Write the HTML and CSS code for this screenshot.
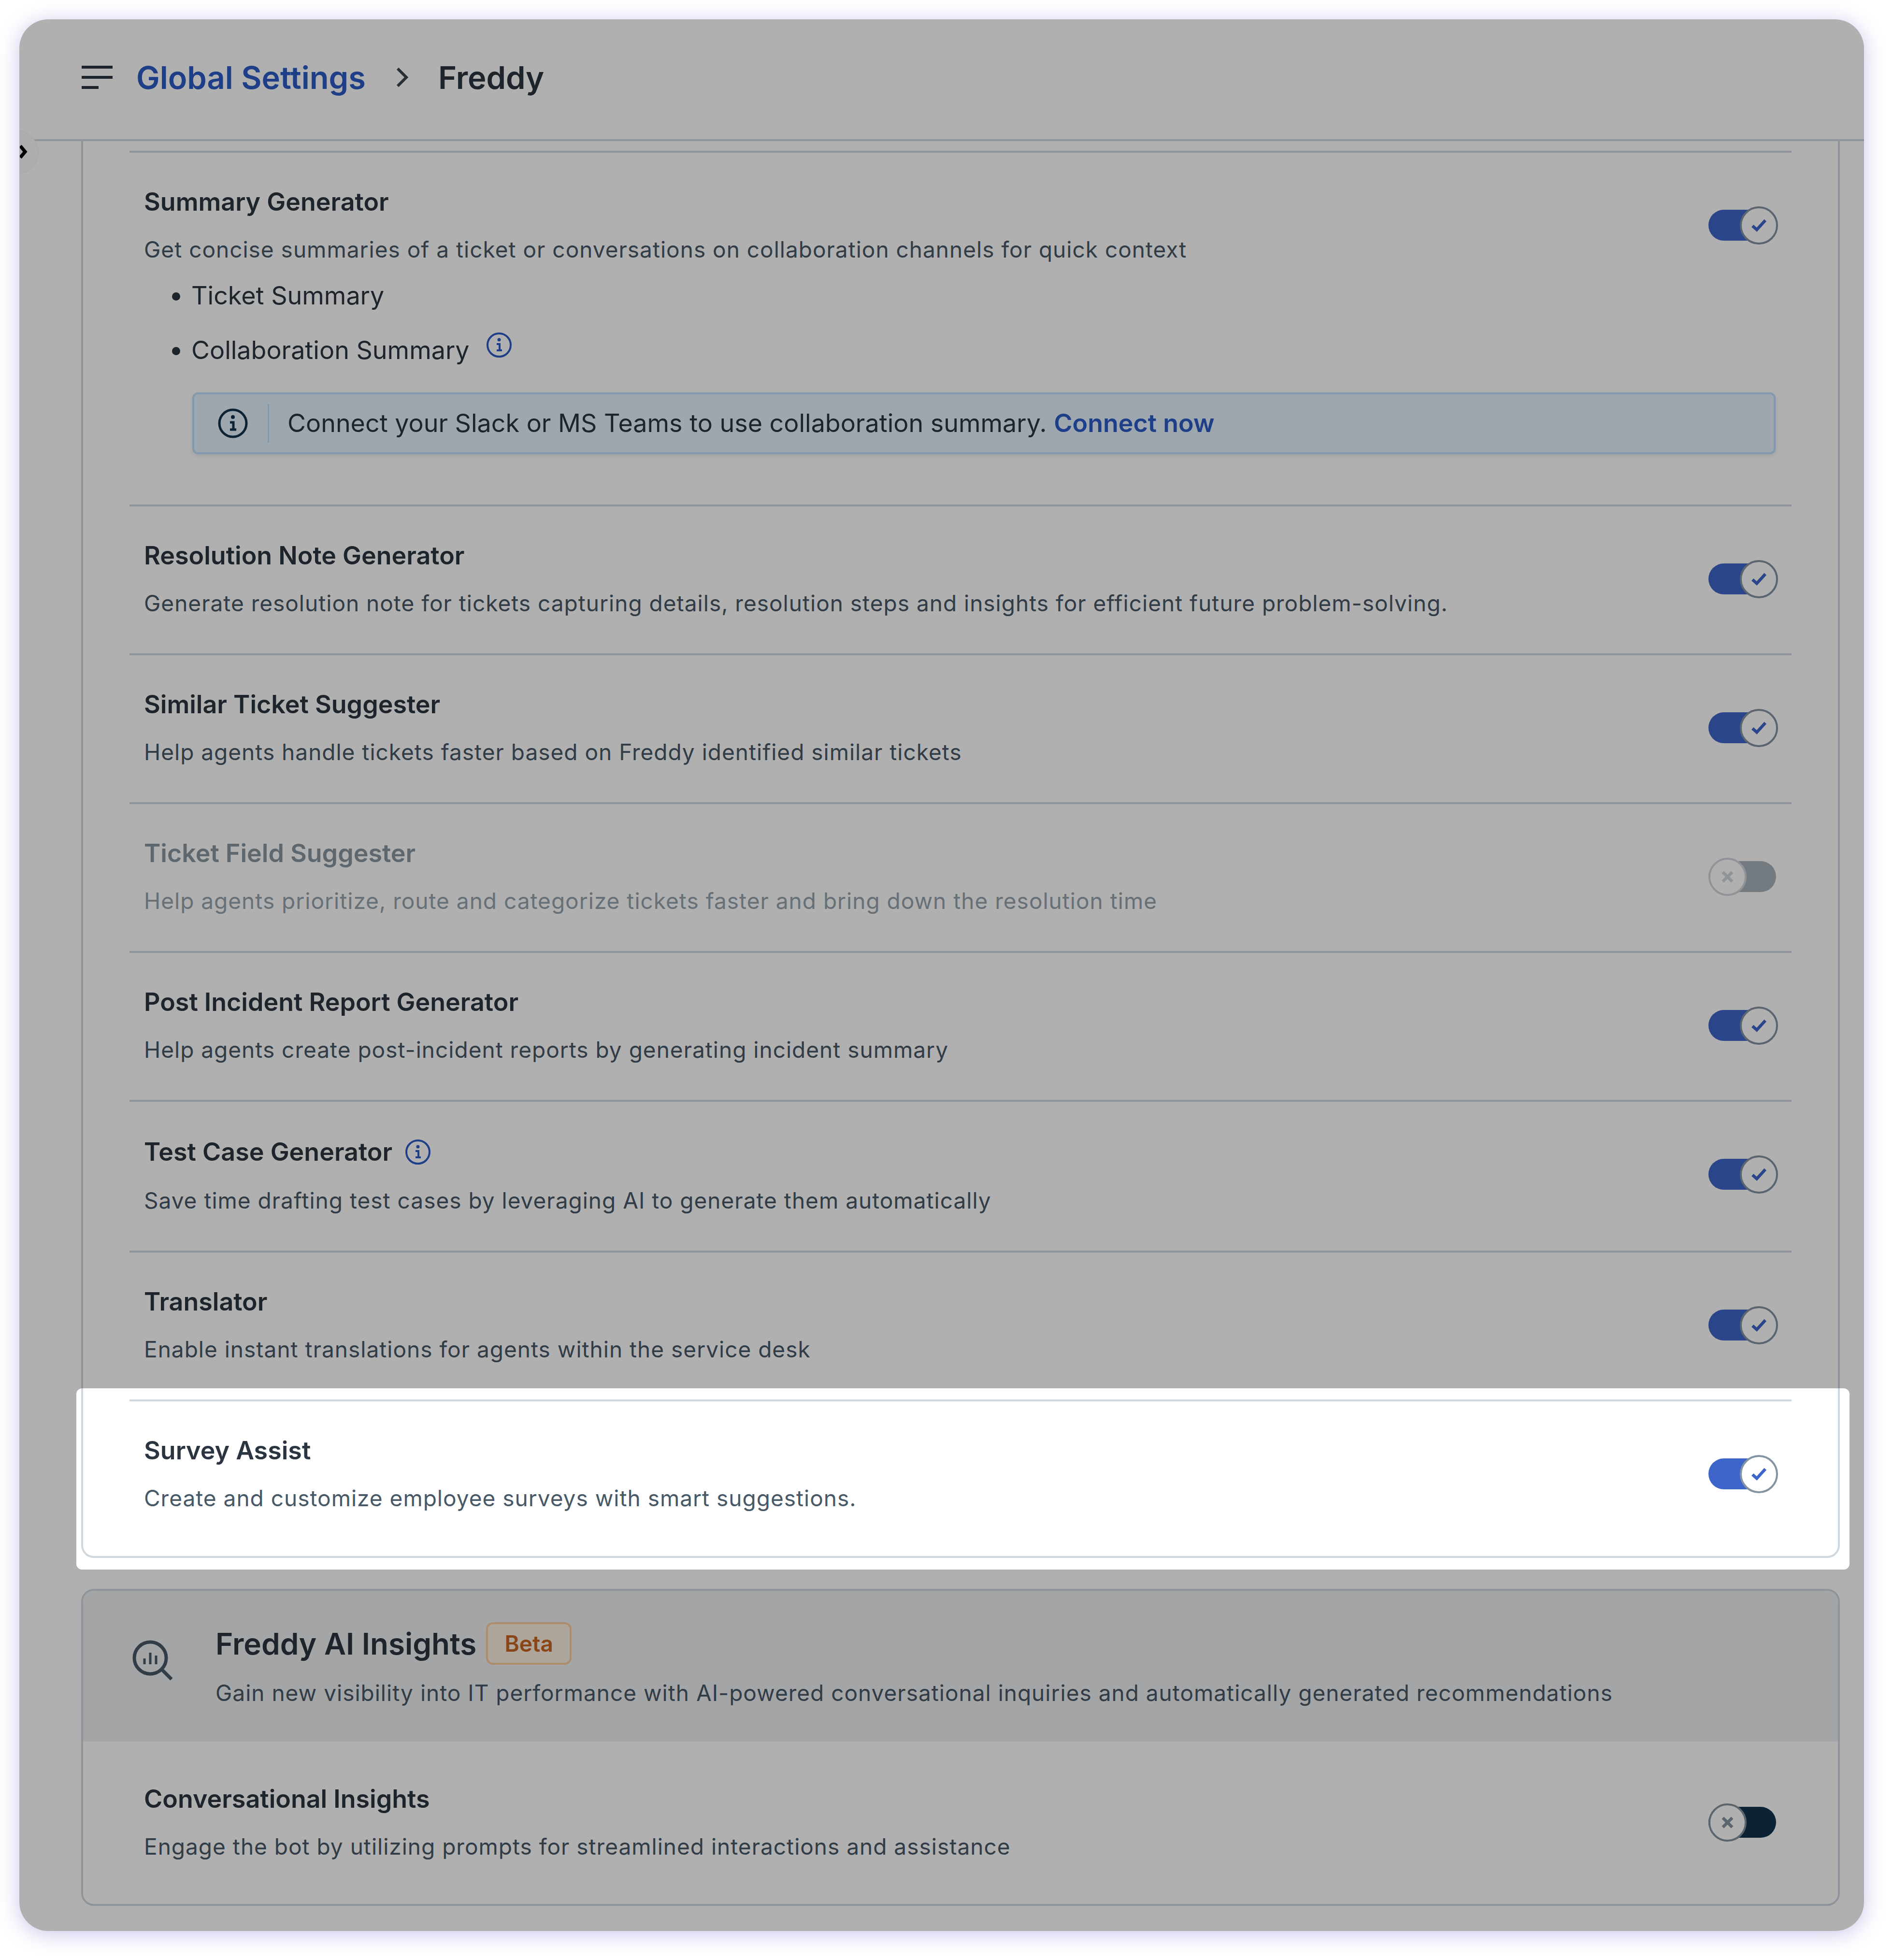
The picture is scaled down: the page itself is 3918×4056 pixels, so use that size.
FILE: index.html
```html
<!DOCTYPE html>
<html lang="en">
<head>
    <meta charset="UTF-8">
    <meta name="viewport" content="width=device-width, initial-scale=1.0">
    <title>Global Settings - Freddy</title>
    <link rel="stylesheet" href="styles.css">
</head>
<body>
<div class="window">
    <div class="side-tab">
        <svg class="side-tab-arrow" viewBox="0 0 20 30"><path d="M1 3 L11 15 L1 27" /></svg>
    </div>

    <header class="topbar">
        <svg class="menu-icon" viewBox="0 0 64 48"><path d="M0 3 H64 M0 24 H64 M0 45 H35" /></svg>
        <a class="crumb-link">Global Settings</a>
        <svg class="crumb-chevron" viewBox="0 0 26 40"><path d="M4 2 L22 20 L4 38" /></svg>
        <span class="crumb-current">Freddy</span>
    </header>

    <main class="content">
        <section class="card card-top">
            <div class="row row-summary">
                <div class="row-head">
                    <div>
                        <div class="row-title">Summary Generator</div>
                        <div class="row-desc">Get concise summaries of a ticket or conversations on collaboration channels for quick context</div>
                    </div>
                    <div class="toggle toggle-on"><span class="knob"><svg viewBox="-40 -40 80 80"><path d="M-15 1 L-5 10 L15 -12" /></svg></span></div>
                </div>
                <ul class="sub-list">
                    <li>Ticket Summary</li>
                    <li>Collaboration Summary <svg class="info-icon" viewBox="0 0 54 54"><circle cx="27" cy="27" r="24" /><circle class="info-dot" cx="27" cy="16" r="3.5" /><path d="M22 25 H28 V38 M22 38 H33" /></svg></li>
                </ul>
                <div class="notice">
                    <svg class="notice-icon" viewBox="0 0 62 62"><circle cx="31" cy="31" r="28" /><circle class="info-dot" cx="31" cy="18" r="4" /><path d="M25 29 H32 V44 M25 44 H38" /></svg>
                    <span class="notice-text">Connect your Slack or MS Teams to use collaboration summary. <a class="notice-link">Connect now</a></span>
                </div>
            </div>

            <div class="row">
                <div class="row-head">
                    <div>
                        <div class="row-title">Resolution Note Generator</div>
                        <div class="row-desc">Generate resolution note for tickets capturing details, resolution steps and insights for efficient future problem-solving.</div>
                    </div>
                    <div class="toggle toggle-on"><span class="knob"><svg viewBox="-40 -40 80 80"><path d="M-15 1 L-5 10 L15 -12" /></svg></span></div>
                </div>
            </div>

            <div class="row">
                <div class="row-head">
                    <div>
                        <div class="row-title">Similar Ticket Suggester</div>
                        <div class="row-desc">Help agents handle tickets faster based on Freddy identified similar tickets</div>
                    </div>
                    <div class="toggle toggle-on"><span class="knob"><svg viewBox="-40 -40 80 80"><path d="M-15 1 L-5 10 L15 -12" /></svg></span></div>
                </div>
            </div>

            <div class="row row-disabled">
                <div class="row-head">
                    <div>
                        <div class="row-title">Ticket Field Suggester</div>
                        <div class="row-desc">Help agents prioritize, route and categorize tickets faster and bring down the resolution time</div>
                    </div>
                    <div class="toggle toggle-off"><span class="knob"><svg viewBox="-40 -40 80 80"><path d="M-11 -11 L11 11 M11 -11 L-11 11" /></svg></span></div>
                </div>
            </div>

            <div class="row">
                <div class="row-head">
                    <div>
                        <div class="row-title">Post Incident Report Generator</div>
                        <div class="row-desc">Help agents create post-incident reports by generating incident summary</div>
                    </div>
                    <div class="toggle toggle-on"><span class="knob"><svg viewBox="-40 -40 80 80"><path d="M-15 1 L-5 10 L15 -12" /></svg></span></div>
                </div>
            </div>

            <div class="row">
                <div class="row-head">
                    <div>
                        <div class="row-title row-title-icon">Test Case Generator <svg class="info-icon" viewBox="0 0 54 54"><circle cx="27" cy="27" r="24" /><circle class="info-dot" cx="27" cy="16" r="3.5" /><path d="M22 25 H28 V38 M22 38 H33" /></svg></div>
                        <div class="row-desc">Save time drafting test cases by leveraging AI to generate them automatically</div>
                    </div>
                    <div class="toggle toggle-on"><span class="knob"><svg viewBox="-40 -40 80 80"><path d="M-15 1 L-5 10 L15 -12" /></svg></span></div>
                </div>
            </div>

            <div class="row">
                <div class="row-head">
                    <div>
                        <div class="row-title">Translator</div>
                        <div class="row-desc">Enable instant translations for agents within the service desk</div>
                    </div>
                    <div class="toggle toggle-on"><span class="knob"><svg viewBox="-40 -40 80 80"><path d="M-15 1 L-5 10 L15 -12" /></svg></span></div>
                </div>
            </div>

            <div class="row">
                <div class="row-head">
                    <div>
                        <div class="row-title">Survey Assist</div>
                        <div class="row-desc">Create and customize employee surveys with smart suggestions.</div>
                    </div>
                    <div class="toggle toggle-on"><span class="knob"><svg viewBox="-40 -40 80 80"><path d="M-15 1 L-5 10 L15 -12" /></svg></span></div>
                </div>
            </div>

            <!-- product tour cut-out: dims everything but the last row -->
            <div class="spotlight"></div>
        </section>

        <section class="card card-insights">
            <div class="insights-band">
                <svg class="insights-icon" viewBox="0 0 84 84">
                    <circle cx="37" cy="37" r="33" />
                    <path d="M61 61 L81 81" />
                    <path class="insights-bars" d="M25 38 V50 M37 26 V50 M49 32 V50" />
                </svg>
                <div>
                    <div class="insights-title">Freddy AI Insights <span class="badge">Beta</span></div>
                    <div class="row-desc insights-desc">Gain new visibility into IT performance with AI-powered conversational inquiries and automatically generated recommendations</div>
                </div>
            </div>
            <div class="row row-flat">
                <div class="row-head">
                    <div>
                        <div class="row-title">Conversational Insights</div>
                        <div class="row-desc">Engage the bot by utilizing prompts for streamlined interactions and assistance</div>
                    </div>
                    <div class="toggle toggle-off"><span class="knob"><svg viewBox="-40 -40 80 80"><path d="M-11 -11 L11 11 M11 -11 L-11 11" /></svg></span></div>
                </div>
            </div>
        </section>
    </main>
</div>
</body>
</html>
```

FILE: styles.css
```css
body {
    margin: 0;
    padding: 40px 60px 60px 40px;
    background-color: #fff;
    font-family: Inter, "Liberation Sans", sans-serif;
    color: #475867;
}

.window {
    position: relative;
    height: 3956px;
    border-radius: 60px;
    overflow: hidden;
    background-color: #fff;
}

/* separate wrapper would be needed if overflow clipped this, the shadow is painted outside */
.window {
    box-shadow: 0 6px 44px rgba(84, 64, 190, 0.3);
}

/* Sidebar collapse handle */
.side-tab {
    position: absolute;
    top: 230px;
    left: -50px;
    width: 88px;
    height: 88px;
    border: 1px solid #f0f1f2;
    border-radius: 50%;
    background-color: #fbfbfb;
    z-index: 2;
}

.side-tab-arrow {
    position: absolute;
    top: 28px;
    left: 50px;
    width: 20px;
    height: 30px;
    fill: none;
    stroke: #000;
    stroke-width: 7;
}

/* Top bar */
.topbar {
    display: flex;
    align-items: center;
    height: 240px;
    padding: 0 0 8px 129px;
    border-bottom: 4px solid #cfd7df;
}

.menu-icon {
    width: 64px;
    height: 48px;
    fill: none;
    stroke: #2a3540;
    stroke-width: 6;
    margin-right: 49px;
}

.crumb-link {
    font-size: 65px;
    font-weight: 600;
    color: #2c5cc5;
}

.crumb-chevron {
    width: 26px;
    height: 40px;
    margin: 0 62px 0 62px;
    fill: none;
    stroke: #3c4852;
    stroke-width: 6;
}

.crumb-current {
    font-size: 65px;
    font-weight: 600;
    color: #2a3540;
}

/* Cards */
.content {
    padding: 0 50px 0 128px;
}

.card {
    position: relative;
    border: 4px solid #cfd7df;
    border-radius: 26px;
}

.card-top {
    border-top: 0;
    border-radius: 0 0 26px 26px;
    padding: 20px 0 16px;
}

.card-insights {
    margin-top: 64px;
}

.spotlight {
    position: absolute;
    left: -14px;
    right: -24px;
    bottom: -28px;
    height: 375px;
    border-radius: 12px;
    box-shadow: 0 0 0 6000px rgba(0, 0, 0, 0.31);
    pointer-events: none;
    z-index: 5;
}

/* Rows */
.row {
    margin: 0 96px;
    padding: 72px 28px 74px 30px;
    border-top: 4px solid #cfd7df;
}

.row-head {
    display: flex;
    justify-content: space-between;
    align-items: flex-start;
}

.row-summary {
    padding-bottom: 104px;
}

.row-flat {
    padding-top: 85px;
    padding-bottom: 89px;
    border-top-color: transparent;
}

.row-title {
    font-size: 52px;
    font-weight: 600;
    line-height: 60px;
    color: #2a3541;
}

.row-title-icon {
    display: flex;
    align-items: center;
    gap: 26px;
    height: 64px;
}

.row-desc {
    margin-top: 38px;
    font-size: 46px;
    line-height: 60px;
    letter-spacing: 1px;
    color: #475867;
}

.row-disabled .row-title {
    color: #87959f;
}

.row-disabled .row-desc {
    color: #95a2ad;
}

/* Bullets under the first row */
.sub-list {
    margin: 36px 0 0;
    padding: 0 0 0 98px;
    font-size: 52px;
    color: #2a3541;
}

.sub-list li {
    line-height: 60px;
    margin-bottom: 45px;
}

.sub-list li:last-child {
    margin-bottom: 0;
}

.info-icon {
    width: 54px;
    height: 54px;
    margin-left: 20px;
    vertical-align: 2px;
    fill: none;
    stroke: #2c5cc5;
    stroke-width: 4;
}

.row-title-icon .info-icon {
    margin-left: 0;
}

.info-dot {
    fill: #2c5cc5;
    stroke: none;
}

/* Inline notice */
.notice {
    display: flex;
    align-items: center;
    height: 120px;
    margin: 57px 5px 0 100px;
    border: 4px solid #bbdcfe;
    border-radius: 12px;
    background-color: #e5f2fd;
    box-shadow: 0 3px 8px rgba(18, 52, 77, 0.12);
}

.notice-icon {
    width: 62px;
    height: 62px;
    flex: none;
    margin-left: 49px;
    fill: none;
    stroke: #12344d;
    stroke-width: 5;
}

.notice-icon .info-dot {
    fill: #12344d;
}

.notice-text {
    margin-left: 41px;
    padding-left: 38px;
    border-left: 3px solid #bbdcfe;
    font-size: 52px;
    line-height: 80px;
    color: #2a3541;
}

.notice-link {
    font-weight: 600;
    color: #2c5cc5;
}

/* Toggle */
.toggle {
    display: flex;
    align-items: center;
    flex: none;
    width: 140px;
    height: 64px;
    margin: 46px 4px 0 0;
    border-radius: 32px;
}

.toggle-on {
    justify-content: flex-end;
    background-color: #3e65c9;
}

.toggle-off {
    justify-content: flex-start;
    background-color: #12344d;
}

.knob {
    flex: none;
    box-sizing: border-box;
    width: 79px;
    height: 79px;
    border: 4px solid #8493a1;
    border-radius: 50%;
    background-color: #fff;
}

.toggle-on .knob {
    margin-right: -4px;
}

.knob svg {
    display: block;
    width: 71px;
    height: 71px;
    fill: none;
    stroke-width: 7;
}

.toggle-on .knob svg {
    stroke: #3e65c9;
}

.toggle-off .knob svg {
    stroke: #8493a1;
}

.row-disabled .toggle {
    opacity: 0.37;
}

/* Freddy AI Insights */
.insights-band {
    display: flex;
    align-items: flex-start;
    height: 312px;
    box-sizing: border-box;
    padding: 77px 0 0 102px;
    background-color: #eef0f2;
    border-radius: 22px 22px 0 0;
}

.insights-icon {
    flex: none;
    width: 84px;
    height: 84px;
    margin: 25px 88px 0 0;
    fill: none;
    stroke: #475867;
    stroke-width: 7;
}

.insights-bars {
    stroke-width: 5;
}

.insights-title {
    display: flex;
    align-items: center;
    gap: 20px;
    height: 64px;
    font-size: 62px;
    font-weight: 600;
    color: #2a3541;
}

.insights-desc {
    margin-top: 40px;
}

.badge {
    box-sizing: border-box;
    height: 88px;
    padding: 0 34px;
    border: 4px solid #f9cea0;
    border-radius: 14px;
    background-color: #fef1e1;
    font-size: 46px;
    line-height: 80px;
    color: #c7651f;
}
```
